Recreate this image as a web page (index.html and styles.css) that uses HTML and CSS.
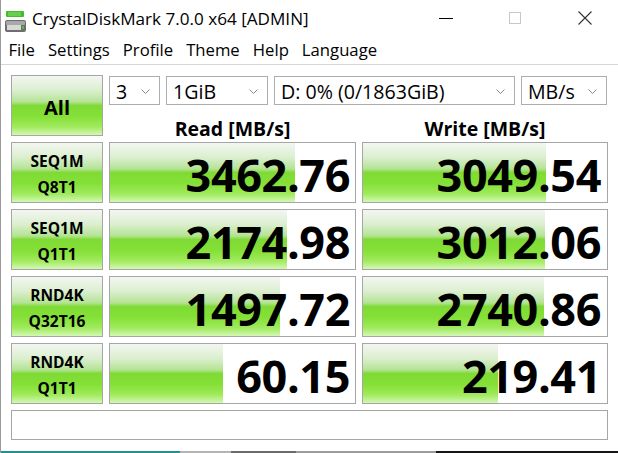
FILE: index.html
```html
<!DOCTYPE html>
<html>
<head>
<meta charset="utf-8">
<link rel="stylesheet" href="styles.css">
</head>
<body>
<div class="window">
  <div class="titlebar">
    <svg class="app-icon" width="24" height="26" viewBox="0 0 24 26">
      <rect x="3" y="5" width="18" height="6" rx="1" fill="#3fbf2a"/>
      <rect x="5" y="6.5" width="13" height="1" fill="#8fe070"/>
      <rect x="5" y="8.5" width="13" height="1" fill="#8fe070"/>
      <rect x="2" y="14" width="21" height="12" rx="2" fill="#6e6e6e"/>
      <rect x="3" y="15" width="19" height="4" rx="1" fill="#a8a8a8"/>
      <rect x="4" y="19" width="14" height="5" fill="#d8d8d8"/>
      <rect x="19" y="20" width="2" height="3" fill="#38d020"/>
    </svg>
    <div class="title">CrystalDiskMark 7.0.0 x64 [ADMIN]</div>
    <div class="controls">
      <svg class="ctl" width="16" height="16" viewBox="0 0 16 16"><path d="M1 8.5H15" stroke="#000" stroke-width="1"/></svg>
      <svg class="ctl" width="16" height="16" viewBox="0 0 16 16"><rect x="2.5" y="2.5" width="11" height="11" fill="none" stroke="#c8c8c8" stroke-width="1"/></svg>
      <svg class="ctl" width="16" height="16" viewBox="0 0 16 16"><path d="M1.5 1.5L14.5 14.5M14.5 1.5L1.5 14.5" stroke="#333" stroke-width="1.1"/></svg>
    </div>
  </div>
  <div class="menubar">
    <span class="menu-item">File</span>
    <span class="menu-item">Settings</span>
    <span class="menu-item">Profile</span>
    <span class="menu-item">Theme</span>
    <span class="menu-item">Help</span>
    <span class="menu-item">Language</span>
  </div>
  <div class="main">
    <div class="btn all">All</div>
    <div class="top-right">
      <div class="combos">
        <div class="combo c-count"><span>3</span><svg class="chev" width="9" height="5" viewBox="0 0 9 5"><path d="M0.5 0.5L4.5 4.5L8.5 0.5" fill="none" stroke="#888" stroke-width="1"/></svg></div>
        <div class="combo c-size"><span>1GiB</span><svg class="chev" width="9" height="5" viewBox="0 0 9 5"><path d="M0.5 0.5L4.5 4.5L8.5 0.5" fill="none" stroke="#888" stroke-width="1"/></svg></div>
        <div class="combo c-drive"><span>D: 0% (0/1863GiB)</span><svg class="chev" width="9" height="5" viewBox="0 0 9 5"><path d="M0.5 0.5L4.5 4.5L8.5 0.5" fill="none" stroke="#888" stroke-width="1"/></svg></div>
        <div class="combo c-unit"><span>MB/s</span><svg class="chev" width="9" height="5" viewBox="0 0 9 5"><path d="M0.5 0.5L4.5 4.5L8.5 0.5" fill="none" stroke="#888" stroke-width="1"/></svg></div>
      </div>
      <div class="headers">
        <div class="hdr">Read [MB/s]</div>
        <div class="hdr">Write [MB/s]</div>
      </div>
    </div>

    <div class="btn label"><span>SEQ1M</span><span>Q8T1</span></div>
    <div class="bar" style="background-size: 185px 100%">3462.76</div>
    <div class="bar write" style="background-size: 183px 100%">3049.54</div>

    <div class="btn label"><span>SEQ1M</span><span>Q1T1</span></div>
    <div class="bar" style="background-size: 177px 100%">2174.98</div>
    <div class="bar write" style="background-size: 182px 100%">3012.06</div>

    <div class="btn label"><span>RND4K</span><span>Q32T16</span></div>
    <div class="bar" style="background-size: 170px 100%">1497.72</div>
    <div class="bar write" style="background-size: 181px 100%">2740.86</div>

    <div class="btn label"><span>RND4K</span><span>Q1T1</span></div>
    <div class="bar" style="background-size: 113px 100%">60.15</div>
    <div class="bar write" style="background-size: 135px 100%">219.41</div>

    <div class="comment"></div>
  </div>
  <div class="desktop">
    <span class="seg s1"></span><span class="seg s2"></span><span class="seg s3"></span><span class="seg s4"></span><span class="seg s5"></span>
  </div>
</div>
</body>
</html>
```

FILE: styles.css
```css
html, body {
  margin: 0;
  padding: 0;
  background: #ffffff;
}
body {
  width: 618px;
  height: 453px;
  overflow: hidden;
  font-family: "Open Sans", "Noto Sans", sans-serif;
  color: #000;
}
.window {
  width: 618px;
  height: 453px;
  box-sizing: border-box;
  border-left: 1px solid #9a9a9a;
  display: flex;
  flex-direction: column;
  background: #fff;
}
.titlebar {
  height: 36px;
  display: flex;
  align-items: center;
  padding-left: 2px;
}
.app-icon {
  margin-right: 5px;
  margin-top: 2px;
}
.title {
  font-size: 17.1px;
  flex: 1;
  white-space: nowrap;
  margin-top: 1px;
}
.controls {
  display: flex;
  align-items: center;
  margin-top: -1px;
}
.ctl {
  margin-right: 54px;
}
.controls .ctl:nth-child(2) { margin-left: -1px; }
.controls .ctl:last-child { margin-right: 25px; }
.menubar {
  height: 28px;
  display: flex;
  align-items: center;
  padding-left: 1px;
  border-bottom: 1px solid #d6d6d6;
}
.menu-item {
  font-size: 16.7px;
  padding: 0 6.5px;
  line-height: 30px;
  white-space: nowrap;
}
.main {
  display: grid;
  grid-template-columns: 92px 247px 246px;
  grid-template-rows: 61px 61px 61px 61px 61px 30px;
  column-gap: 6px;
  row-gap: 6px;
  padding: 10px 0 0 10px;
  flex: 1;
}
.btn {
  box-sizing: border-box;
  border: 1px solid #a6a6a6;
  background: linear-gradient(#f3f6f1 0%, #dcefd0 24%, #b4e394 44%, #80da36 50%, #84e036 68%, #a0ea5c 86%, #d4f8b4 100%);
  display: flex;
  align-items: center;
  justify-content: center;
  font-weight: 700;
}
.all {
  font-size: 20px;
  padding-top: 3px;
}
.label {
  flex-direction: column;
  font-size: 15.5px;
  line-height: 26px;
  padding-top: 2px;
}
.top-right {
  grid-column: 2 / 4;
  display: flex;
  flex-direction: column;
}
.combos {
  display: flex;
  gap: 6px;
  margin-top: 1px;
}
.combo {
  box-sizing: border-box;
  height: 29px;
  border: 1px solid #adadad;
  display: flex;
  align-items: center;
  justify-content: space-between;
  padding: 0 9px 0 6px;
  font-size: 19.6px;
  background: #fff;
  white-space: nowrap;
}
.combo span { line-height: 27px; margin-top: 2px; }
.chev { margin-top: 1px; }
.c-count { width: 51px; }
.c-size { width: 102px; }
.c-drive { width: 241px; }
.c-unit { width: 86px; }
.headers {
  display: grid;
  grid-template-columns: 247px 246px;
  column-gap: 6px;
  flex: 1;
  align-items: end;
}
.hdr {
  text-align: center;
  font-weight: 700;
  font-size: 19.5px;
  line-height: 24px;
  margin-bottom: -5px;
}
.bar {
  box-sizing: border-box;
  border: 1px solid #a6a6a6;
  background-color: #fff;
  background-image: linear-gradient(#f3f6f1 0%, #dcefd0 24%, #b4e394 44%, #80da36 50%, #84e036 68%, #a0ea5c 86%, #d4f8b4 100%);
  background-repeat: no-repeat;
  background-position: 0 0;
  display: flex;
  align-items: center;
  justify-content: flex-end;
  padding: 4px 5px 0 0;
  font-weight: 700;
  font-size: 45px;
  letter-spacing: -0.4px;
  line-height: 1;
}
.bar.write {
  padding-right: 6px;
}
.comment {
  grid-column: 1 / 4;
  box-sizing: border-box;
  border: 1px solid #a6a6a6;
}
.desktop {
  height: 2px;
  display: flex;
}
.seg { display: block; height: 2px; }
.s1 { width: 179px; background: #2a8f8c; }
.s2 { width: 51px; background: #b4b4b4; }
.s3 { width: 65px; background: #6a6a6a; }
.s4 { width: 140px; background: #9c9c9c; }
.s5 { flex: 1; background: #151515; }
```
